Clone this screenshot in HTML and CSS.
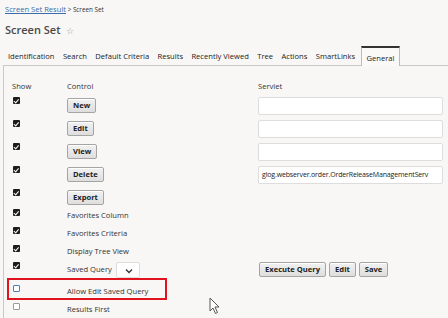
FILE: index.html
```html
<!DOCTYPE html>
<html>
<head>
<meta charset="utf-8">
<link rel="stylesheet" href="styles.css">
</head>
<body>
<div class="breadcrumb"><a href="#" class="crumb-link">Screen Set Result</a><span class="crumb-sep"> &gt; Screen Set</span></div>
<h1 class="title">Screen Set <span class="star">☆</span></h1>
<div class="tabs">
  <span class="tab">Identification</span>
  <span class="tab">Search</span>
  <span class="tab">Default Criteria</span>
  <span class="tab">Results</span>
  <span class="tab">Recently Viewed</span>
  <span class="tab">Tree</span>
  <span class="tab">Actions</span>
  <span class="tab">SmartLinks</span>
  <span class="tab tab-active">General</span>
</div>
<div class="panel">
  <div class="row head">
    <div class="c-show">Show</div>
    <div class="c-ctrl">Control</div>
    <div class="c-serv">Servlet</div>
  </div>
  <div class="row r-btn">
    <div class="c-show"><span class="cb on"></span></div>
    <div class="c-ctrl"><button class="btn">New</button></div>
    <div class="c-serv"><div class="inp"></div></div>
  </div>
  <div class="row r-btn">
    <div class="c-show"><span class="cb on"></span></div>
    <div class="c-ctrl"><button class="btn">Edit</button></div>
    <div class="c-serv"><div class="inp"></div></div>
  </div>
  <div class="row r-btn">
    <div class="c-show"><span class="cb on"></span></div>
    <div class="c-ctrl"><button class="btn">View</button></div>
    <div class="c-serv"><div class="inp"></div></div>
  </div>
  <div class="row r-btn">
    <div class="c-show"><span class="cb on"></span></div>
    <div class="c-ctrl"><button class="btn">Delete</button></div>
    <div class="c-serv"><div class="inp inp-val">glog.webserver.order.OrderReleaseManagementServ</div></div>
  </div>
  <div class="row r-btn2">
    <div class="c-show"><span class="cb on"></span></div>
    <div class="c-ctrl"><button class="btn">Export</button></div>
  </div>
  <div class="row r-txt">
    <div class="c-show"><span class="cb on"></span></div>
    <div class="c-ctrl lbl">Favorites Column</div>
  </div>
  <div class="row r-txt">
    <div class="c-show"><span class="cb on"></span></div>
    <div class="c-ctrl lbl">Favorites Criteria</div>
  </div>
  <div class="row r-txt2">
    <div class="c-show"><span class="cb on"></span></div>
    <div class="c-ctrl lbl">Display Tree View</div>
  </div>
  <div class="row r-sq">
    <div class="c-show"><span class="cb on"></span></div>
    <div class="c-ctrl lbl sq">Saved Query <span class="sel"><svg width="8" height="6" viewBox="0 0 8 6"><path d="M1 1.5 L4 4.5 L7 1.5" fill="none" stroke="#333" stroke-width="1.3"/></svg></span></div>
    <div class="c-serv btns"><button class="btn">Execute Query</button><button class="btn">Edit</button><button class="btn">Save</button></div>
  </div>
  <div class="row r-txt hl">
    <div class="c-show"><span class="cb off focus"></span></div>
    <div class="c-ctrl lbl">Allow Edit Saved Query</div>
  </div>
  <div class="row r-txt">
    <div class="c-show"><span class="cb off"></span></div>
    <div class="c-ctrl lbl">Results First</div>
  </div>
</div>
<svg class="cursor" width="12" height="18" viewBox="0 0 12 18"><path d="M1 1 L1 14 L4 11 L6.5 16.5 L8.5 15.5 L6 10 L10 10 Z" fill="#fff" stroke="#555" stroke-width="1"/></svg>
</body>
</html>
```
FILE: styles.css
```css
html, body {
  margin: 0;
  padding: 0;
}
body {
  background: #f8f7f5;
  font-family: "Open Sans", "Noto Sans", sans-serif;
  color: #333;
  width: 448px;
  height: 318px;
  overflow: hidden;
  position: relative;
}
.breadcrumb {
  padding: 3px 0 0 5px;
  height: 15px;
  line-height: 12px;
  font-size: 7.6px;
  box-sizing: border-box;
}
.crumb-link {
  color: #3b6ea8;
  text-decoration: underline;
}
.crumb-sep {
  font-size: 6.3px;
  color: #333;
}
.title {
  margin: 6px 0 0 5px;
  font-size: 11px;
  font-weight: 600;
  line-height: 18px;
  color: #4a4a4a;
  height: 18px;
}
.star {
  font-size: 9px;
  color: #999;
  font-weight: normal;
  margin-left: 3px;
}
.tabs {
  display: flex;
  align-items: flex-end;
  margin: 6px 0 0 5px;
  height: 20px;
  font-size: 7.6px;
  color: #222;
}
.tab {
  padding: 0 3px 4px;
  margin-right: 2.4px;
  line-height: 10px;
}
.tab-active {
  height: 20px;
  box-sizing: border-box;
  padding: 5px 5px 0;
  border-top: 2px solid #333;
  border-left: 1px solid #bbb;
  border-right: 1px solid #bbb;
  background: #faf9f7;
  position: relative;
  top: 1px;
}
.panel {
  margin-left: 3px;
  border-left: 1px solid #c9c9c9;
  border-top: 1px solid #c9c9c9;
  padding: 14px 0 0 8px;
  font-size: 7.6px;
}
.row {
  display: flex;
  align-items: flex-start;
  position: relative;
}
.c-show {
  width: 55px;
  flex: none;
}
.c-ctrl {
  width: 191px;
  flex: none;
}
.c-serv {
  flex: none;
  width: 186px;
}
.head {
  line-height: 12px;
  height: 12px;
  margin-bottom: 5px;
}
.r-btn { height: 23px; }
.r-btn2 { height: 20px; }
.r-txt { height: 18px; }
.r-txt2 { height: 17px; }
.r-sq { height: 23px; }
.lbl {
  line-height: 12px;
}
.cb {
  display: block;
  width: 7px;
  height: 7px;
  margin-left: 1px;
  box-sizing: border-box;
  border-radius: 1px;
  position: relative;
}
.cb.on {
  background: #1c1c1c;
}
.cb.on::after {
  content: "";
  position: absolute;
  left: 2px;
  top: 0.5px;
  width: 1.5px;
  height: 3.5px;
  border-right: 1px solid #fff;
  border-bottom: 1px solid #fff;
  transform: rotate(40deg);
}
.cb.off {
  background: #fff;
  border: 1px solid #9a9a9a;
}
.cb.focus {
  border-color: #4a7fc1;
}
.btn {
  font-family: inherit;
  font-size: 7.6px;
  font-weight: 700;
  color: #222;
  height: 15px;
  padding: 0 5px;
  margin: 1px 0 0 0;
  background: linear-gradient(#f1f1f1, #dedede);
  border: 1px solid #a5a5a5;
  border-radius: 2px;
  box-shadow: inset 0 1px 0 #fff;
  line-height: 13px;
}
.inp {
  width: 185px;
  height: 18px;
  box-sizing: border-box;
  background: #fff;
  border: 1px solid #ddd;
  border-radius: 2px;
  font-size: 7.6px;
  line-height: 16px;
  padding-left: 3px;
  white-space: nowrap;
  overflow: hidden;
  color: #222;
}
.inp-val {
  font-size: 7px;
  letter-spacing: -0.15px;
}
.sq {
  display: flex;
  align-items: flex-start;
  padding-top: 1px;
}
.sel {
  display: inline-flex;
  align-items: flex-end;
  justify-content: flex-end;
  width: 24px;
  height: 16px;
  box-sizing: border-box;
  margin: -1px 0 0 4px;
  background: #fff;
  border: 1px solid #ddd;
  border-radius: 2px;
  padding: 0 6px 3px 0;
}
.btns {
  display: flex;
  gap: 3px;
  padding-left: 1px;
}
.btns .btn {
  margin-top: 0;
}
.hl::after {
  content: "";
  position: absolute;
  left: -5px;
  top: -7px;
  width: 160px;
  height: 22px;
  box-sizing: border-box;
  border: 2.5px solid #e0141e;
}
.cursor {
  position: absolute;
  left: 209px;
  top: 297px;
}
```
